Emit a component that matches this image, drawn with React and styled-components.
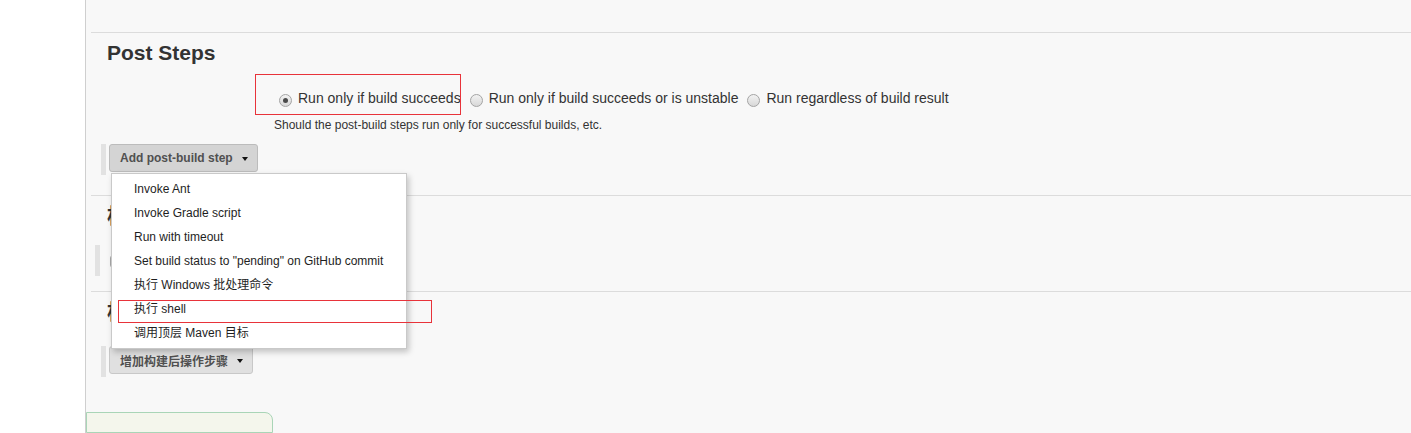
import React from 'react'
import styled, { createGlobalStyle } from 'styled-components'

const GlobalStyle = createGlobalStyle`
  html, body {
    margin: 0;
    padding: 0;
    height: 100%;
    overflow: hidden;
    background: #fff;
  }
  body {
    font-family: "Liberation Sans", "Noto Sans CJK SC", Arial, sans-serif;
    color: #333;
  }
  #root {
    height: 100%;
  }
`

const Page = styled.div`
  display: flex;
  height: 100%;
`

const Gutter = styled.div`
  width: 85px;
  flex-shrink: 0;
  background: #fff;
`

const Main = styled.div`
  flex: 1;
  min-width: 0;
  display: flex;
  flex-direction: column;
  padding-top: 32px;
  background: #f8f8f8;
  border-left: 1px solid #cfcfcf;
`

const Section = styled.section`
  position: relative;
  margin-left: 5px;
  padding-bottom: ${p => p.$pb || 0}px;
  border-top: 1px solid #dcdcdc;
`

const Heading = styled.h2`
  margin: 8px 0 0 16px;
  font-size: 21px;
  line-height: 24px;
  font-weight: bold;
  color: #333;
`

const Field = styled.div`
  position: relative;
  margin: 23px 0 0 183px;
`

const RadioGroup = styled.div`
  display: flex;
  align-items: center;
  gap: 4px;
  height: 20px;
  font-size: 14px;
  line-height: 20px;
  white-space: nowrap;
`

const Option = styled.label`
  display: inline-flex;
  align-items: center;
`

const Radio = styled.span`
  position: relative;
  box-sizing: border-box;
  width: 13px;
  height: 13px;
  margin: 4px 6px 0 5px;
  border-radius: 50%;
  border: 1px solid #a4a4a4;
  background: linear-gradient(#f2f2f2, #d8d8d8);

  &::after {
    content: '';
    display: ${p => (p.$checked ? 'block' : 'none')};
    position: absolute;
    left: 3px;
    top: 3px;
    width: 5px;
    height: 5px;
    border-radius: 50%;
    background: #4a4a4a;
  }
`

const Help = styled.div`
  margin: 9px 0 0 183px;
  font-size: 12px;
  line-height: 16px;
  color: #333;
`

const Annotation = styled.div`
  position: absolute;
  box-sizing: border-box;
  border: 1px solid #e8333a;
  pointer-events: none;
`

const ButtonRow = styled.div`
  position: relative;
  display: flex;
  align-items: flex-start;
  margin: ${p => p.$mt}px 0 0 ${p => p.$ml}px;
`

const Bar = styled.div`
  width: 5px;
  height: 31px;
  margin-right: 3px;
  background: #e2e2e2;
`

const Button = styled.button`
  display: flex;
  align-items: center;
  gap: 9px;
  box-sizing: border-box;
  height: 28px;
  padding: 0 9px 0 10px;
  border: 1px solid ${p => (p.$active ? '#bcbcbc' : '#c8c8c8')};
  border-radius: 3px;
  background: ${p => (p.$active ? '#d4d4d4' : '#e0e0e0')};
  font-family: inherit;
  font-size: 12px;
  font-weight: bold;
  color: #505050;
  white-space: nowrap;
  cursor: pointer;
`

const Caret = styled.span`
  width: 0;
  height: 0;
  margin-top: 1px;
  border-left: 3.5px solid transparent;
  border-right: 3.5px solid transparent;
  border-top: 4.5px solid #111;
`

const Menu = styled.ul`
  position: absolute;
  top: 29px;
  left: 10px;
  z-index: 10;
  box-sizing: border-box;
  width: 296px;
  margin: 0;
  padding: 3px 0 3px;
  list-style: none;
  background: #fff;
  border: 1px solid #c9c9c9;
  box-shadow: 2px 3px 6px rgba(0, 0, 0, 0.22);
`

const MenuItem = styled.li`
  height: 24px;
  padding-left: 22px;
  font-size: 12px;
  line-height: 24px;
  color: #1e1e1e;
  white-space: nowrap;
  cursor: pointer;
`

const CheckRow = styled.div`
  display: flex;
  align-items: flex-start;
  margin: 17px 0 0 4px;
  font-size: 13px;
`

const Checkbox = styled.span`
  box-sizing: border-box;
  width: 13px;
  height: 13px;
  margin: 10px 6px 0 7px;
  border: 1px solid #a8a8a8;
  border-radius: 3px;
  background: linear-gradient(#fafafa, #e2e2e2);
`

const CheckLabel = styled.span`
  margin-top: 9px;
  line-height: 16px;
`

const Tip = styled.div`
  box-sizing: border-box;
  width: 187px;
  height: 40px;
  margin-top: 35px;
  border: 1px solid #a9d5b7;
  border-radius: 0 8px 0 0;
  background: #f4f6ec;
`

const menuItems = [
  'Invoke Ant',
  'Invoke Gradle script',
  'Run with timeout',
  'Set build status to "pending" on GitHub commit',
  '执行 Windows 批处理命令',
  '执行 shell',
  '调用顶层 Maven 目标',
]

const radios = [
  { label: 'Run only if build succeeds', checked: true },
  { label: 'Run only if build succeeds or is unstable' },
  { label: 'Run regardless of build result' },
]

export default function App() {
  return (
    <>
      <GlobalStyle />
      <Page>
        <Gutter />
        <Main>
          <Section $pb={20}>
            <Heading>Post Steps</Heading>
            <Field>
              <RadioGroup>
                {radios.map(r => (
                  <Option key={r.label}>
                    <Radio $checked={r.checked} />
                    {r.label}
                  </Option>
                ))}
              </RadioGroup>
              <Annotation style={{ left: -19, top: -14, width: 206, height: 41 }} />
            </Field>
            <Help>Should the post-build steps run only for successful builds, etc.</Help>
            <ButtonRow $mt={11} $ml={10}>
              <Bar />
              <Button $active>
                Add post-build step
                <Caret />
              </Button>
              <Menu>
                {menuItems.map(item => (
                  <MenuItem key={item}>{item}</MenuItem>
                ))}
                <Annotation style={{ left: 6, top: 126, width: 314, height: 23 }} />
              </Menu>
            </ButtonRow>
          </Section>

          <Section $pb={15}>
            <Heading>构建设置</Heading>
            <CheckRow>
              <Bar />
              <Checkbox />
              <CheckLabel>E-mail Notification</CheckLabel>
            </CheckRow>
          </Section>

          <Section>
            <Heading>构建后操作</Heading>
            <ButtonRow $mt={22} $ml={10}>
              <Bar />
              <Button>
                增加构建后操作步骤
                <Caret />
              </Button>
            </ButtonRow>
          </Section>

          <Tip />
        </Main>
      </Page>
    </>
  )
}
